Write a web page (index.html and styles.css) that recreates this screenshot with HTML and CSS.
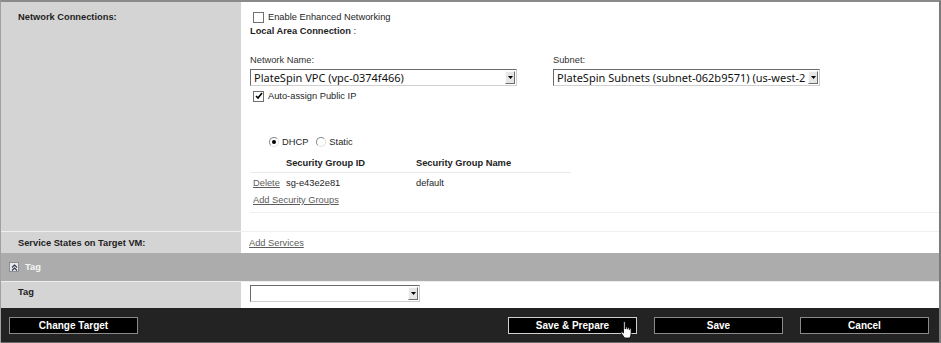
FILE: index.html
```html
<!DOCTYPE html>
<html lang="en">
<head>
    <meta charset="UTF-8">
    <title>Target Workload Settings</title>
    <link rel="stylesheet" href="styles.css">
</head>
<body>
    <div class="settings">
        <div class="row network-row">
            <div class="label-cell">Network Connections:</div>
            <div class="value-cell">
                <div class="nic-block">
                    <div class="check-line">
                        <span class="checkbox"></span>
                        <span>Enable Enhanced Networking</span>
                    </div>
                    <div class="nic-title">Local Area Connection <span class="plain">:</span></div>

                    <div class="fields">
                        <div class="field">
                            <div class="field-label">Network Name:</div>
                            <div class="dropdown">
                                <span class="dropdown-text">PlateSpin VPC (vpc-0374f466)</span>
                                <span class="dropdown-arrow"><svg width="5" height="3" viewBox="0 0 5 3"><path d="M0 0h5L2.5 3z" fill="#000"/></svg></span>
                            </div>
                        </div>
                        <div class="field">
                            <div class="field-label">Subnet:</div>
                            <div class="dropdown">
                                <span class="dropdown-text">PlateSpin Subnets (subnet-062b9571) (us-west-2</span>
                                <span class="dropdown-arrow"><svg width="5" height="3" viewBox="0 0 5 3"><path d="M0 0h5L2.5 3z" fill="#000"/></svg></span>
                            </div>
                        </div>
                    </div>

                    <div class="check-line auto-ip">
                        <span class="checkbox checked"><svg width="8" height="8" viewBox="0 0 8 8"><path d="M1 4l2 2 4-5" fill="none" stroke="#000" stroke-width="1.6"/></svg></span>
                        <span>Auto-assign Public IP</span>
                    </div>

                    <div class="radio-line">
                        <span class="radio selected"></span><span>DHCP</span>
                        <span class="radio"></span><span>Static</span>
                    </div>

                    <table class="sg-table">
                        <tr>
                            <th class="col-action"></th>
                            <th class="col-id">Security Group ID</th>
                            <th>Security Group Name</th>
                        </tr>
                        <tr>
                            <td class="col-action"><a href="#">Delete</a></td>
                            <td>sg-e43e2e81</td>
                            <td>default</td>
                        </tr>
                    </table>
                    <a href="#" class="add-link">Add Security Groups</a>
                </div>
            </div>
        </div>

        <div class="row services-row">
            <div class="label-cell">Service States on Target VM:</div>
            <div class="value-cell"><a href="#">Add Services</a></div>
        </div>

        <div class="section-header">
            <span class="collapse-icon"><svg width="7" height="7" viewBox="0 0 7 7"><path d="M1 3.5l2.5-2.5 2.5 2.5M1 6.5l2.5-2.5 2.5 2.5" fill="none" stroke="#334" stroke-width="1.1"/></svg></span>
            <span>Tag</span>
        </div>

        <div class="row tag-row">
            <div class="label-cell">Tag</div>
            <div class="value-cell">
                <div class="dropdown tag-dropdown">
                    <span class="dropdown-text"></span>
                    <span class="dropdown-arrow"><svg width="5" height="3" viewBox="0 0 5 3"><path d="M0 0h5L2.5 3z" fill="#000"/></svg></span>
                </div>
            </div>
        </div>

        <div class="footer">
            <button class="btn">Change Target</button>
            <div class="footer-right">
                <button class="btn btn-hover">Save &amp; Prepare
                    <svg class="cursor" width="15" height="19" viewBox="0 0 15 19"><path d="M4.5 1.3c0-.9 1.6-.9 1.6 0V8h.4V6.6c0-.9 1.6-.9 1.6 0V8h.4V7.2c0-.9 1.6-.9 1.6 0V8.6h.4V8c0-.9 1.6-.9 1.6 0v4.6c0 1.9-.8 3.2-1.4 4.4H5.6L2.3 12.2c-.6-.9.5-1.900 1.3-1.1l.9 1.1V1.3z" fill="#fff" stroke="#000" stroke-width=".8"/></svg>
                </button>
                <button class="btn">Save</button>
                <button class="btn">Cancel</button>
            </div>
        </div>
    </div>
</body>
</html>
```

FILE: styles.css
```css
body {
    margin: 0;
    font-family: "Liberation Sans", Arial, sans-serif;
    font-size: 9.3px;
    color: #1e1e1e;
    background-color: #fff;
}
.settings {
    height: 341px;
    border-top: 2px solid #8a8a8a;
    border-left: 1px solid #a0a0a0;
    border-right: 2px solid #7a7a7a;
    display: flex;
    flex-direction: column;
}
.row {
    display: grid;
    grid-template-columns: 240px 1fr;
}
.label-cell {
    background-color: #d4d4d4;
    font-weight: bold;
    padding-left: 17px;
    line-height: 14px;
}
.value-cell {
    background-color: #fff;
}
a {
    color: #5c5c5c;
    text-decoration: underline;
}
.network-row {
    height: 229px;
    border-bottom: 1px solid #efefef;
}
.network-row .label-cell {
    padding-top: 8px;
}
.nic-block {
    margin-left: 9px;
    padding-top: 8px;
    padding-bottom: 5px;
    border-bottom: 1px solid #efefef;
}
.check-line {
    display: flex;
    align-items: center;
    height: 14px;
    padding-left: 3px;
}
.checkbox {
    width: 9px;
    height: 9px;
    border: 1px solid #707070;
    background-color: #fff;
    margin-right: 4px;
    display: flex;
    align-items: center;
    justify-content: center;
}
.nic-title {
    font-weight: bold;
    line-height: 14px;
}
.nic-title .plain {
    font-weight: normal;
}
.fields {
    display: flex;
    gap: 36px;
    margin-top: 15px;
}
.field {
    width: 267px;
}
.field-label {
    color: #333;
    line-height: 14px;
    margin-bottom: 2px;
}
.dropdown {
    display: flex;
    height: 15px;
    border: 1px solid;
    border-color: #6a6a6a #d0d0d0 #d0d0d0 #6a6a6a;
    background-color: #fff;
}
.dropdown-text {
    flex: 1;
    overflow: hidden;
    white-space: nowrap;
    padding-left: 3px;
    font-family: "Noto Sans", "DejaVu Sans", sans-serif;
    font-size: 11px;
    line-height: 15px;
    color: #111;
}
.dropdown-arrow {
    width: 10px;
    height: 13px;
    margin: 1px 1px 0 0;
    background-color: #e6e6e6;
    border: 1px solid;
    border-color: #fafafa #6e6e6e #6e6e6e #fafafa;
    box-sizing: border-box;
    display: flex;
    align-items: center;
    justify-content: center;
}
.auto-ip {
    margin-top: 3px;
}
.radio-line {
    display: flex;
    align-items: center;
    height: 14px;
    margin-top: 32px;
    padding-left: 19px;
}
.radio {
    width: 8px;
    height: 8px;
    border-radius: 50%;
    border: 1px solid #8a8a8a;
    border-right-color: #e0e0e0;
    border-bottom-color: #e0e0e0;
    background-color: #fff;
    margin-right: 3px;
    position: relative;
}
.radio + span {
    margin-right: 8px;
}
.radio.selected::after {
    content: "";
    position: absolute;
    left: 2px;
    top: 2px;
    width: 4px;
    height: 4px;
    border-radius: 50%;
    background-color: #000;
}
.sg-table {
    width: 321px;
    border-collapse: collapse;
    margin-top: 4px;
}
.sg-table th {
    text-align: left;
    height: 19px;
    border-bottom: 1px solid #eaeaea;
    padding: 0;
    color: #222;
}
.sg-table td {
    height: 20px;
    padding: 0;
}
.sg-table .col-action {
    width: 33px;
    padding-left: 3px;
}
.sg-table .col-id {
    width: 130px;
}
.add-link {
    display: block;
    line-height: 14px;
    padding-left: 3px;
}
.services-row {
    height: 21px;
}
.services-row .label-cell,
.services-row .value-cell {
    line-height: 22px;
}
.services-row .value-cell {
    padding-left: 8px;
}
.section-header {
    height: 28px;
    background-color: #acacac;
    color: #f4f4f4;
    font-weight: bold;
    display: flex;
    align-items: center;
    padding-left: 8px;
    gap: 6px;
}
.collapse-icon {
    width: 8px;
    height: 8px;
    border: 1px solid #8b8f96;
    background-color: #e8eaee;
    display: flex;
    align-items: center;
    justify-content: center;
}
.tag-row {
    height: 26px;
    border-top: 1px solid #efefef;
}
.tag-row .label-cell {
    padding-top: 3px;
}
.tag-row .value-cell {
    padding: 3px 0 0 9px;
}
.tag-dropdown {
    width: 168px;
}
.footer {
    flex: 1;
    background-color: #232323;
    display: flex;
    align-items: flex-start;
    padding: 9px 10px 0 8px;
    border-bottom: 1px solid #6a6a6a;
}
.footer-right {
    margin-left: auto;
    display: flex;
    gap: 17px;
}
.btn {
    width: 129px;
    height: 17px;
    background-color: #000;
    color: #fff;
    border: 1px solid #8a8a8a;
    font-family: "Liberation Sans", Arial, sans-serif;
    font-size: 10px;
    font-weight: bold;
    padding: 0;
    position: relative;
}
.btn-hover {
    border-color: #d0d0d0;
}
.cursor {
    position: absolute;
    left: 110px;
    top: 3px;
}
```
